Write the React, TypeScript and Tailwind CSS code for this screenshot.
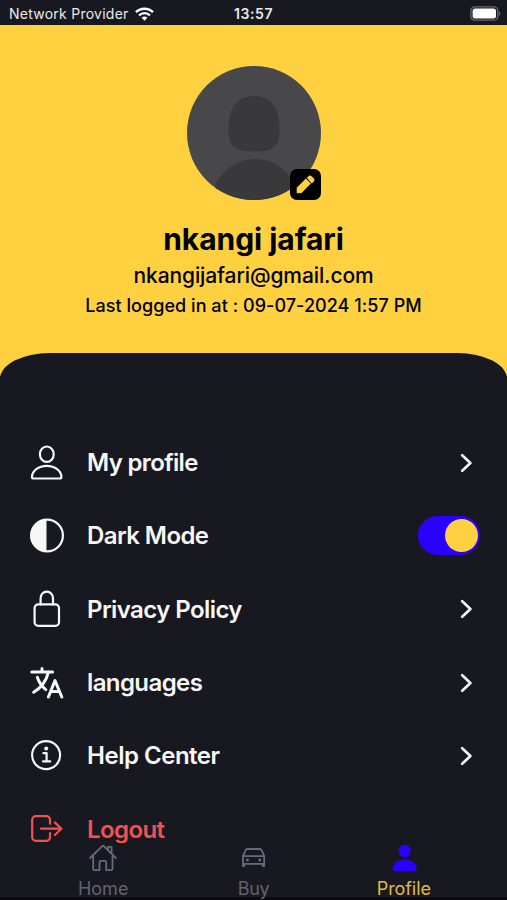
import React from "react"

const STROKE = {
  fill: "none",
  stroke: "currentColor",
  strokeWidth: 2.2,
  strokeLinecap: "round",
  strokeLinejoin: "round",
} as const

function PersonIcon() {
  return (
    <svg className="size-9 overflow-visible" viewBox="0 0 36 36" {...STROKE}>
      <ellipse cx="17.8" cy="9.2" rx="6.9" ry="7.7" />
      <path d="M17.7 20.8C9.5 20.8 3 25.8 3 32c0 1 .6 1.5 1.6 1.5h26.2c1 0 1.6-.5 1.6-1.5 0-6.2-6.5-11.2-14.7-11.2z" />
    </svg>
  )
}

function ContrastIcon() {
  return (
    <svg className="size-9 overflow-visible" viewBox="0 0 36 36" {...STROKE}>
      <circle cx="18" cy="17.5" r="15.9" />
      <path d="M17.5 1.6a15.9 15.9 0 0 0 0 31.8z" fill="currentColor" stroke="none" />
    </svg>
  )
}

function LockIcon() {
  return (
    <svg className="size-9 overflow-visible" viewBox="0 0 36 36" {...STROKE}>
      <rect x="5.6" y="13.4" width="24.4" height="21.4" rx="3.6" />
      <path d="M11.6 13.4V7.2a6.2 6.6 0 0 1 12.4 0v6.2" />
    </svg>
  )
}

function LanguageIcon() {
  return (
    <svg className="size-9 overflow-visible" viewBox="0 0 36 36" {...STROKE} strokeWidth={3}>
      <path d="M2.8 6.9h20.8M13 3.6v3.3M19.5 6.9C17.5 15 12 23 4.6 27.2M8.4 12.4c1.6 4.6 4.4 9 8.4 12.2" />
      <path d="M19.4 32 26 15.6 32.8 32M21.6 26.6h9" />
    </svg>
  )
}

function InfoIcon() {
  return (
    <svg className="size-9 overflow-visible" viewBox="0 0 36 36" {...STROKE}>
      <circle cx="17.1" cy="17.1" r="14" />
      <circle cx="17.2" cy="10.6" r="2" fill="currentColor" stroke="none" />
      <path d="M14.4 15.2h3.2v8M14 23.4h7.2" />
    </svg>
  )
}

function LogoutIcon() {
  return (
    <svg className="size-9 overflow-visible" viewBox="0 0 36 36" {...STROKE}>
      <path d="M21 12.8V8.8a3.6 3.6 0 0 0-3.6-3.6H6.8a3.6 3.6 0 0 0-3.6 3.6v17.4a3.6 3.6 0 0 0 3.6 3.6h10.6a3.6 3.6 0 0 0 3.6-3.6v-4.1" />
      <path d="M12 17.7h20.4M25.8 11.4l6.6 6.3-6.6 6.3" />
    </svg>
  )
}

function HomeIcon() {
  return (
    <svg className="size-7" viewBox="0 0 28 28" {...STROKE} strokeWidth={1.8}>
      <path d="M4.2 12.6v12.2c0 .9.5 1.4 1.4 1.4h4.9v-8c0-.8.5-1.3 1.3-1.3h4.1c.8 0 1.3.5 1.3 1.3v8h4.9c.9 0 1.4-.5 1.4-1.4V12.6" />
      <path d="M1.2 14 13 2.3c.6-.6 1.4-.6 2 0L26.8 14M22.6 9.6V2.8h-3.6V6" />
    </svg>
  )
}

function CarIcon() {
  return (
    <svg className="size-7" viewBox="0 0 28 28" {...STROKE} strokeWidth={1.8}>
      <path d="m4 12.2 2.6-6c.4-.8.9-1.2 1.8-1.2h12.4c.9 0 1.4.4 1.8 1.2l2.6 6" />
      <path d="M4 12.2h21.2v9.8h-1.4v-2.200H5.400v2.200H4z" />
      <circle cx="8.400" cy="16.100" r="1.500" fill="currentColor" stroke="none" />
      <circle cx="20.800" cy="16.100" r="1.500" fill="currentColor" stroke="none" />
    </svg>
  )
}

function ProfileIcon() {
  return (
    <svg className="size-7" viewBox="0 0 28 28" fill="currentColor">
      <ellipse cx="14.7" cy="7" rx="6" ry="6.5" />
      <path d="M14.700 15.600c-6.600 0-12 4-12 9.400 0 1.400.7 2 2 2h20c1.300 0 2-.6 2-2 0-5.400-5.400-9.400-12-9.400z" />
    </svg>
  )
}

function Chevron() {
  return (
    <svg className="mr-2 h-5 w-3" viewBox="0 0 12 20" {...STROKE} strokeWidth={2.6}>
      <path d="M2.200 2.200 10.400 10l-8.200 7.800" />
    </svg>
  )
}

function Toggle() {
  return (
    <div className="flex h-[39px] w-[62px] items-center justify-end rounded-full bg-[#2b00ff] pr-0.5">
      <div className="size-[33px] rounded-full bg-[#ffd140]" />
    </div>
  )
}

const MENU: { label: string; icon: React.ComponentType; text: string; right?: React.ReactNode }[] = [
  { label: "My profile", icon: PersonIcon, text: "tracking-[-0.66px] text-[#f7f7f8]", right: <Chevron /> },
  { label: "Dark Mode", icon: ContrastIcon, text: "tracking-[-0.58px] text-[#f7f7f8]", right: <Toggle /> },
  { label: "Privacy Policy", icon: LockIcon, text: "tracking-[-0.58px] text-[#f7f7f8]", right: <Chevron /> },
  { label: "languages", icon: LanguageIcon, text: "tracking-[-0.6px] text-[#f7f7f8]", right: <Chevron /> },
  { label: "Help Center", icon: InfoIcon, text: "tracking-[-0.48px] text-[#f7f7f8]", right: <Chevron /> },
  { label: "Logout", icon: LogoutIcon, text: "tracking-[-0.6px] text-[#f05252]" },
]

const TABS = [
  { label: "Home", icon: HomeIcon, iconColor: "text-[#696b74]", text: "text-[#62646c]" },
  { label: "Buy", icon: CarIcon, iconColor: "text-[#696b74]", text: "text-[#62646c] tracking-[-0.3px]" },
  { label: "Profile", icon: ProfileIcon, iconColor: "text-[#2b00ff]", text: "text-[#e2bb3f] tracking-[-0.1px]" },
]

function StatusBar() {
  return (
    <header className="grid h-[25px] shrink-0 grid-cols-[1fr_auto_1fr] items-center bg-[#181920] px-[6px] pt-0.5 text-[#e9e9eb]">
      <div className="flex items-center gap-[6px] pl-[3px]">
        <span className="text-[14px] tracking-[0.25px] whitespace-nowrap">Network Provider</span>
        <svg className="h-[14px] w-[19px]" viewBox="0 0 19 14" fill="none" stroke="white" strokeWidth="2.400">
          <path d="M.9 5.200a12.300 12.300 0 0 1 17.200 0M4 8.400a7.900 7.900 0 0 1 11 0" />
          <path d="M9.500 13.800 6.600 10.800a4.200 4.200 0 0 1 5.800 0z" fill="white" stroke="none" />
        </svg>
      </div>
      <span className="text-[14px] font-semibold tracking-[0.6px]">13:57</span>
      <svg className="h-[15px] w-[31px] justify-self-end" viewBox="0 0 31 15">
        <rect x=".8" y=".8" width="27" height="13.400" rx="4" fill="none" stroke="#686970" strokeWidth="1.300" />
        <rect x="2.600" y="2.600" width="23.400" height="9.800" rx="2.500" fill="white" />
        <path d="M29 5.200c1.600.6 1.600 4 0 4.600z" fill="#686970" />
      </svg>
    </header>
  )
}

function Avatar() {
  return (
    <div className="relative size-[134px]">
      <svg className="size-full" viewBox="0 0 134 134">
        <defs>
          <clipPath id="avatar">
            <circle cx="67" cy="67" r="67" />
          </clipPath>
        </defs>
        <g clipPath="url(#avatar)">
          <rect width="134" height="134" fill="#48484a" />
          <path
            d="M67 30c14 0 22.500 9 24.500 21 1.600 10 1.400 19-1 25.500C87 84 78 85.500 67 85.500S47 84 43.500 76.500C41 70 41 61 42.500 51 44.500 39 53 30 67 30z"
            fill="#39393c"
          />
          <path d="M28 119c8-15 22-26 39-26s31 9 37 20v21H28z" fill="#39393c" />
        </g>
      </svg>
      <button className="absolute right-0 bottom-0 flex size-[31px] items-center justify-center rounded-[7px] bg-black text-[#ffd140]">
        <svg className="size-[19px]" viewBox="0 0 19 19" fill="currentColor">
          <path d="M.7 18.200v-5.400L9.900 3.600l5 5-9.300 9.300z" />
          <path d="m10.800 2.700 1.400-1.300a2.600 2.600 0 0 1 3.600 0l1.800 1.800a2.600 2.600 0 0 1 0 3.600l-1.900 1.600z" />
        </svg>
      </button>
    </div>
  )
}

export default function App() {
  return (
    <div className="flex h-[900px] w-[507px] flex-col overflow-hidden bg-[#181920] font-['Inter','Liberation_Sans',sans-serif]">
      <StatusBar />

      {/* Account summary */}
      <section className="flex h-[351px] shrink-0 flex-col items-center bg-[#ffd140] pt-[41px] text-black">
        <Avatar />
        <h1 className="mt-[20px] text-[30px] leading-[38px] font-bold tracking-[-0.05px]">nkangi jafari</h1>
        <p className="mt-[4px] text-[21px] leading-[28px] font-medium tracking-[-0.1px]">nkangijafari@gmail.com</p>
        <p className="mt-[4px] text-[18px] leading-[24px] font-medium tracking-[0.05px]">
          Last logged in at : 09-07-2024 1:57 PM
        </p>
      </section>

      {/* Settings list */}
      <main className="z-10 -mt-[23.500px] h-[490.500px] shrink-0 overflow-hidden rounded-t-[50px_26px] bg-[#181920] pt-[73.500px]">
        <ul className="flex flex-col">
          {MENU.map(({ label, icon: Icon, text, right }) => (
            <li key={label}>
              <button className={`flex h-[73.300px] w-full items-center pr-[27px] pl-[29px] ${text}`}>
                <Icon />
                <span className="ml-[22px] flex-1 pt-px text-left text-[24px] font-semibold">{label}</span>
                {right}
              </button>
            </li>
          ))}
        </ul>
      </main>

      <nav className="z-20 grid h-[54px] shrink-0 grid-cols-3 px-[28px]">
        {TABS.map(({ label, icon: Icon, iconColor, text }) => (
          <a key={label} className="flex flex-col items-center pt-px">
            <span className={iconColor}>
              <Icon />
            </span>
            <span className={`mt-[5px] text-[18px] leading-[24px] ${text}`}>{label}</span>
          </a>
        ))}
      </nav>
      <div className="h-[3px] shrink-0 bg-[#0c0710]" />
    </div>
  )
}
